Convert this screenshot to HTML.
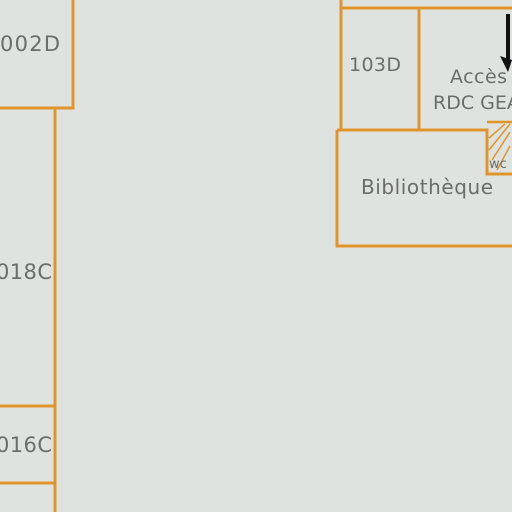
<!DOCTYPE html>
<html><head><meta charset="utf-8"><style>
html,body{margin:0;padding:0;background:#dfe2de;}
svg{display:block}
text{font-family:"DejaVu Sans","Liberation Sans",sans-serif;fill:#6b6d6b}
</style></head><body>
<svg width="512" height="512" viewBox="0 0 512 512">
<rect width="512" height="512" fill="#dfe3df"/>
<g stroke="#e0952c" stroke-width="3" fill="none">
<path d="M73 0V108H0"/>
<path d="M55 108V512"/>
<path d="M0 406H55M0 483H55"/>
<path d="M341 0V130M342 8H512M419 8V130"/>
<path d="M337 130H487V174H512M337 130V246H512"/>
<path d="M487 122H512" stroke-width="2.5"/>
<path d="M489 150L510 124M492 160L510 132M489 138L505 124M497 170L510 146" stroke-width="1.5"/>
</g>
<path d="M508 14V62" stroke="#111" stroke-width="4"/>
<path d="M500 56L508 72L512 60" fill="#111"/>
<g font-size="21">
<text x="0" y="51" textLength="60">002D</text>
<text x="-4" y="279" textLength="56">018C</text>
<text x="-4" y="452" textLength="56">016C</text>
<text x="349" y="71" font-size="19" textLength="52">103D</text>
<text x="450" y="83" font-size="19" textLength="57">Accès</text>
<text x="433" y="109" font-size="19">RDC GEA</text>
<text x="361" y="194" font-size="20" textLength="132">Bibliothèque</text>
<text x="489" y="168" font-size="13">wc</text>
</g>
</svg>
</body></html>
